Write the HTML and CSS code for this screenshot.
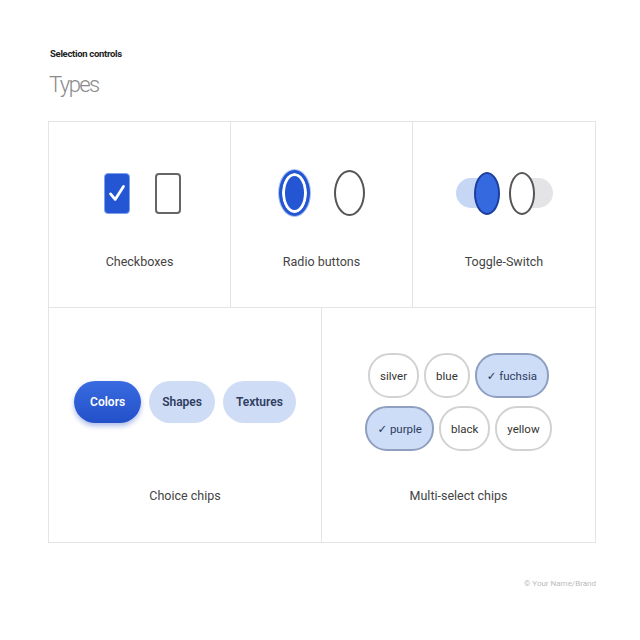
FILE: index.html
```html
<!DOCTYPE html>
<html>
<head>
<meta charset="utf-8">
<link rel="stylesheet" href="styles.css">
</head>
<body>
<div class="page">
  <div class="eyebrow">Selection controls</div>
  <h1 class="title">Types</h1>
  <div class="board">
    <div class="row row-top">
      <div class="cell">
        <div class="area area-checks">
          <span class="checkbox checked">
            <svg viewBox="0 0 26 40" width="26" height="40"><path d="M6 21 L11 27 L20 13" fill="none" stroke="#fff" stroke-width="3" stroke-linecap="round" stroke-linejoin="round"/></svg>
          </span>
          <span class="checkbox"></span>
        </div>
        <div class="label">Checkboxes</div>
      </div>
      <div class="cell">
        <div class="area">
          <span class="radio selected"></span>
          <span class="radio"></span>
        </div>
        <div class="label">Radio buttons</div>
      </div>
      <div class="cell">
        <div class="area area-toggles">
          <span class="toggle on"><span class="knob"></span></span>
          <span class="toggle off"><span class="knob"></span></span>
        </div>
        <div class="label">Toggle-Switch</div>
      </div>
    </div>
    <div class="row row-bottom">
      <div class="cell">
        <div class="area area-big">
          <span class="chip choice active">Colors</span>
          <span class="chip choice">Shapes</span>
          <span class="chip choice">Textures</span>
        </div>
        <div class="label">Choice chips</div>
      </div>
      <div class="cell">
        <div class="area area-big area-multi">
          <div class="multi-row">
            <span class="chip multi">silver</span>
            <span class="chip multi">blue</span>
            <span class="chip multi sel">✓ fuchsia</span>
          </div>
          <div class="multi-row">
            <span class="chip multi sel">✓ purple</span>
            <span class="chip multi">black</span>
            <span class="chip multi">yellow</span>
          </div>
        </div>
        <div class="label">Multi-select chips</div>
      </div>
    </div>
  </div>
  <div class="footer">© Your Name/Brand</div>
</div>
</body>
</html>
```

FILE: styles.css
```css
* { box-sizing: border-box; }
html, body { margin: 0; padding: 0; background: #fff; }
body { font-family: Roboto, "Open Sans", "DejaVu Sans", sans-serif; color: #333; }

.page { width: 640px; height: 640px; padding: 48px 44px 0 48px; }

.eyebrow { font-size: 9.5px; font-weight: 700; line-height: 12px; color: #222; margin-left: 2px; letter-spacing: -0.3px; }
.title { margin: 11px 0 0 1px; font-size: 22px; font-weight: 300; line-height: 28px; color: #8a8a8a; letter-spacing: -1.6px; }

.board { margin-top: 22px; border: 1px solid #e4e4e4; width: 548px; }
.row { display: grid; }
.row-top { grid-template-columns: 1fr 1fr 1fr; height: 186px; border-bottom: 1px solid #e4e4e4; }
.row-bottom { grid-template-columns: 1fr 1fr; height: 234px; }
.cell { display: flex; flex-direction: column; align-items: center; border-right: 1px solid #e4e4e4; }
.cell:last-child { border-right: none; }

.area { display: flex; align-items: center; justify-content: center; height: 50px; margin-top: 46px; gap: 24px; }
.area-checks { padding-left: 6px; gap: 25px; }
.label { font-size: 12.5px; line-height: 16px; color: #444; margin-top: 36px; }

.area-big { height: 164px; margin-top: 12px; gap: 8px; }
.row-bottom .label { margin-top: 4px; }

/* checkbox */
.checkbox { width: 26px; height: 41px; border: 2.5px solid #666; border-radius: 4px; background: #fff; display: flex; align-items: center; justify-content: center; }
.checkbox.checked { border: 1.5px solid #7fa2ee; background: #2456d3; }
.checkbox svg { display: block; }

/* radio */
.radio { width: 31px; height: 46px; border-radius: 50%; border: 2.5px solid #555; background: #fff; }
.radio.selected { border: 3px solid #2456d3; background: #2456d3; box-shadow: inset 0 0 0 3px #fff, 0 0 0 1px #a9c0f2; }

/* toggles */
.area-toggles { gap: 9px; }
.toggle { width: 44px; height: 30px; border-radius: 15px; display: flex; align-items: center; }
.toggle.on { background: #c6d7f6; justify-content: flex-end; }
.toggle.off { background: #e4e4e6; justify-content: flex-start; }
.knob { width: 26px; height: 43px; border-radius: 50%; flex: none; }
.toggle.on .knob { background: #3569df; border: 2px solid #1c3e9c; }
.toggle.off .knob { background: #fff; border: 2.5px solid #555; }

/* chips */
.chip { display: inline-flex; align-items: center; justify-content: center; border-radius: 22px; font-size: 12px; white-space: nowrap; }
.choice { height: 42px; padding: 0 13px; background: #cfdcf6; color: #2e3d60; font-weight: 600; }
.choice.active { background: linear-gradient(#3a6be0, #2250c9); color: #fff; padding: 0 16px; box-shadow: 0 3px 5px rgba(30, 70, 190, 0.35); }

.area-multi { flex-direction: column; gap: 8px; }
.multi-row { display: flex; gap: 5px; justify-content: center; }
.multi { height: 45px; padding: 0 10px; border: 2px solid #d2d2d2; background: #fff; color: #333; font-size: 11.5px; }
.multi.sel { background: #cddcf7; border-color: #8f9fbf; color: #2e3d60; }

.footer { margin-top: 36px; width: 548px; text-align: right; font-size: 8px; color: #bbb; }
```
